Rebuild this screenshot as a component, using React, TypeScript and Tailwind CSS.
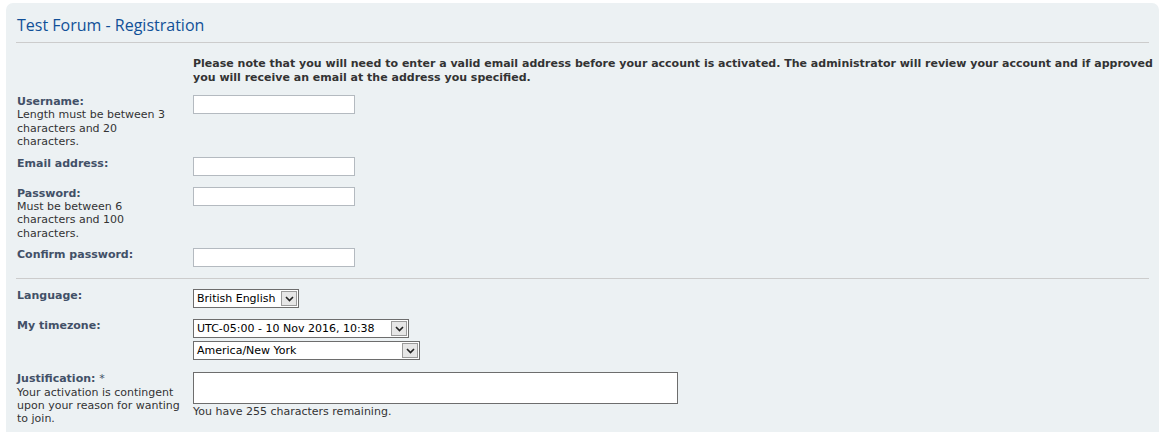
import React from 'react';

const font = { fontFamily: '"DejaVu Sans", Verdana, sans-serif' };

function Chevron() {
  return (
    <svg width="9" height="6" viewBox="0 0 9 6" className="block">
      <path d="M1 1l3.5 3.5L8 1" fill="none" stroke="#222" strokeWidth="1.6" />
    </svg>
  );
}

function FakeSelect({ value, width }: { value: string; width: string }) {
  return (
    <div className={`${width} h-[19px] mb-[3px] flex items-center justify-between bg-white border border-[#6d6d6d] pl-[3px] pr-[1px]`}>
      <span className="text-[11px] leading-none text-black whitespace-nowrap">{value}</span>
      <span className="w-[16px] h-[15px] flex items-center justify-center bg-[#e6e6e6] border border-[#9a9a9a]">
        <Chevron />
      </span>
    </div>
  );
}

function Row({ label, desc, children }: { label: React.ReactNode; desc?: string[]; children: React.ReactNode }) {
  return (
    <div className="flex items-start py-1">
      <div className="w-[177px] shrink-0 pl-px text-[11px] leading-[13.4px] whitespace-nowrap">
        <div className="font-bold text-[#425067]">{label}</div>
        {desc && desc.map((line) => <div key={line} className="text-[#333333]">{line}</div>)}
      </div>
      <div className="flex-1 min-w-0 text-[11px] leading-[13.4px] text-[#333333]">{children}</div>
    </div>
  );
}

function TextInput() {
  return <div className="w-[162px] h-[19px] mb-[3px] bg-white border border-[#b4bac0]" />;
}

export default function App() {
  return (
    <div className="h-[432px] overflow-hidden bg-white pt-[3px] px-[6px]" style={font}>
      <div className="w-[1153px] h-[440px] bg-[#ecf1f3] rounded-[7px] px-[10px]">
        <h2 className="pt-[12px] pb-[7px] pl-px text-[16px] leading-[20px] text-[#115098] border-b border-[#cccccc]" style={{ fontFamily: '"Open Sans", "DejaVu Sans", sans-serif' }}>
          Test Forum - Registration
        </h2>

        <div className="pl-[177px] pt-[14px] pb-[6px] text-[11px] leading-[14px] font-bold text-[#333333] whitespace-nowrap">
          Please note that you will need to enter a valid email address before your account is activated. The administrator will review your account and if approved
          <br />
          you will receive an email at the address you specified.
        </div>

        <Row label="Username:" desc={['Length must be between 3', 'characters and 20', 'characters.']}>
          <TextInput />
        </Row>
        <Row label="Email address:">
          <TextInput />
        </Row>
        <Row label="Password:" desc={['Must be between 6', 'characters and 100', 'characters.']}>
          <TextInput />
        </Row>
        <Row label="Confirm password:">
          <TextInput />
        </Row>

        <div className="mt-[4px] mb-[6px] border-t border-[#cccccc]" />

        <Row label="Language:">
          <FakeSelect value="British English" width="w-[106px]" />
        </Row>
        <Row label="My timezone:">
          <FakeSelect value="UTC-05:00 - 10 Nov 2016, 10:38" width="w-[216px]" />
          <FakeSelect value="America/New York" width="w-[227px]" />
        </Row>
        <div className="pt-px">
          <Row
            label={<>Justification: <span className="font-normal">*</span></>}
            desc={['Your activation is contingent', 'upon your reason for wanting', 'to join.']}
          >
            <div className="w-[485px] h-[32px] bg-white border border-[#6d6d6d]" />
            <div className="mt-px">You have 255 characters remaining.</div>
          </Row>
        </div>
      </div>
    </div>
  );
}
